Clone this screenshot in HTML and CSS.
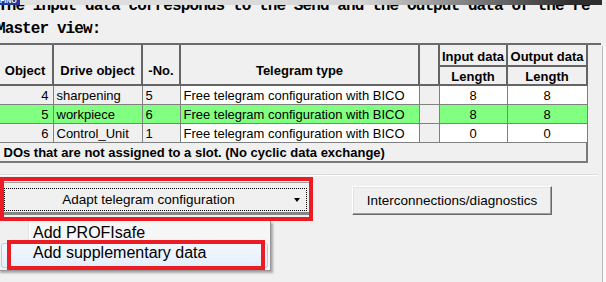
FILE: index.html
```html
<!DOCTYPE html>
<html lang="en">
<head>
<meta charset="UTF-8" />
<title>Telegram configuration</title>
<link rel="stylesheet" href="styles.css">
</head>
<body>

<div class="window">
  <div class="main">

    <!-- Intro text (top half hidden behind the window edge) -->
    <div class="intro">
      <span class="tag">FINO</span>
      <p>The input data corresponds to the Send and the Output data of the re</p>
    </div>
    <h2 class="caption">Master view:</h2>

    <!-- Slot table -->
    <div class="frame">
      <table class="slots">
        <colgroup>
          <col style="width:56px">
          <col style="width:89px">
          <col style="width:38px">
          <col style="width:239px">
          <col style="width:20px">
          <col style="width:68px">
          <col style="width:80px">
        </colgroup>
        <thead>
          <tr>
            <th rowspan="2" class="low">Object</th>
            <th rowspan="2" class="low">Drive object</th>
            <th rowspan="2" class="low">-No.</th>
            <th rowspan="2" class="low">Telegram type</th>
            <th rowspan="2"></th>
            <th>Input data</th>
            <th>Output data</th>
          </tr>
          <tr>
            <th class="sub">Length</th>
            <th class="sub">Length</th>
          </tr>
        </thead>
        <tbody>
          <tr>
            <td class="num">4</td>
            <td>sharpening</td>
            <td>5</td>
            <td class="white">Free telegram configuration with BICO</td>
            <td class="gap"></td>
            <td class="len">8</td>
            <td class="len">8</td>
          </tr>
          <tr class="sel">
            <td class="num">5</td>
            <td>workpiece</td>
            <td>6</td>
            <td class="white">Free telegram configuration with BICO</td>
            <td class="gap"></td>
            <td class="len">8</td>
            <td class="len">8</td>
          </tr>
          <tr>
            <td class="num">6</td>
            <td>Control_Unit</td>
            <td>1</td>
            <td class="white">Free telegram configuration with BICO</td>
            <td class="gap"></td>
            <td class="len">0</td>
            <td class="len">0</td>
          </tr>
          <tr class="note">
            <td colspan="7">DOs that are not assigned to a slot. (No cyclic data exchange)</td>
          </tr>
        </tbody>
      </table>
    </div>

    <div class="rule"></div>

    <!-- Buttons -->
    <div class="actions">
      <div class="combo-mark">
        <div class="combo">
          <div class="focus">
            <span>Adapt telegram configuration</span>
            <i class="arrow"></i>
          </div>
        </div>
      </div>
      <button class="btn">Interconnections/diagnostics</button>
    </div>

    <!-- Dropdown menu -->
    <ul class="menu">
      <li>Add PROFIsafe</li>
      <li class="hot">Add supplementary data</li>
    </ul>
    <div class="item-mark"></div>

  </div>
  <div class="side"></div>
</div>

</body>
</html>
```

FILE: styles.css
```css
/* Reset and basics */
* {margin:0; padding:0; box-sizing:border-box;}
html, body {
  width: 606px;
  height: 282px;
  overflow: hidden;
  background: #f0f0f0;
}
body {
  font-family: "Liberation Sans", Arial, sans-serif;
  font-size: 13px;
  color: #000;
}

.window {
  display: flex;
  height: 282px;
}
.main {
  position: relative;
  width: 602px;
  flex: none;
}
.side {
  flex: 1;
  margin-top: 46px;
  border-left: 1px solid #b9b9b9;
  background: #fafafa;
}

/* Intro lines */
.intro {
  position: relative;
  height: 13px;
  overflow: hidden;
}
.intro p {
  font: bold 16px/16px "Liberation Mono", monospace;
  letter-spacing: -0.9px;
  white-space: nowrap;
  margin: -2px 0 0 -2px;
}
/* window edge covering the top of the first line */
.intro::after {
  content: "";
  position: absolute;
  top: 0; left: 0;
  width: 100%; height: 5px;
  background: linear-gradient(90deg, #e2e2e2 0, #d6d6d6 60%, #2e2e2e 95%);
}
.tag {
  position: absolute;
  top: -3px; left: 0;
  width: 20px; height: 8px;
  background: #24379a;
  color: #fff;
  font: bold 7px/8px "Liberation Sans", sans-serif;
  z-index: 2;
}
.caption {
  height: 30px;
  padding-top: 8px;
  margin-left: -4px;
  font: bold 16px/16px "Liberation Mono", monospace;
  letter-spacing: -0.9px;
  white-space: nowrap;
}

/* Slot table */
.frame {
  width: 601px;
  border-top: 2px solid #6b6b6b;
}
.slots {
  margin-left: -4px;
  width: 590px;
  table-layout: fixed;
  border-collapse: collapse;
}
.slots th {
  background: #f0f0f0;
  border: 2px solid #646464;
  font-weight: bold;
  text-align: center;
  height: 21px;
  padding: 2px 0 0;
  white-space: nowrap;
}
.slots thead tr:first-child th {
  border-top: 0;
}
.slots th.low {
  padding-top: 12px;
}
.slots th.sub {
  height: 19px;
}
.slots td {
  background: #f0f0f0;
  border: 1px solid #808080;
  height: 19px;
  padding: 1px 3px 0;
  white-space: nowrap;
  overflow: hidden;
}
.slots td.num {
  text-align: right;
  padding-right: 4px;
}
.slots td.white,
.slots td.len {
  background: #fff;
}
.slots td.len {
  text-align: center;
}
.slots tr.sel td {
  background: #80ff80;
}
.slots tr.sel td.gap {
  background: #f0f0f0;
}
.slots tr.note td {
  font-weight: bold;
  padding-left: 6px;
  height: 20px;
  border-right: 2px solid #7a7a7a;
  border-bottom: 2px solid #7a7a7a;
}

.rule {
  width: 598px;
  margin-top: 11px;
  border-top: 1px solid #dcdcdc;
  border-bottom: 1px solid #fff;
}

/* Buttons */
.actions {
  display: flex;
  align-items: flex-start;
  gap: 39px;
  margin-top: 1px;
}
.combo-mark {
  width: 313px;
  height: 44px;
  border: 4px solid #ec1c24;
}
.combo {
  margin-top: 1px;
  border-top: 1px solid #a0a0a0;
  border-bottom: 3px solid #868686;
  padding: 5px 2px 1px 0;
}
.focus {
  height: 23px;
  border: 1px dotted #000;
  display: grid;
  grid-template-columns: 1fr 10px;
  align-items: center;
  padding-right: 4px;
  font-size: 13.5px;
}
.focus span {
  text-align: center;
}
.arrow {
  justify-self: center;
  width: 0; height: 0;
  border-style: solid;
  border-width: 4px 3.5px 0;
  border-color: #000 transparent transparent;
}
.btn {
  margin-top: 9px;
  width: 200px;
  height: 29px;
  background: #f0f0f0;
  border: 1px solid;
  border-color: #fff #696969 #696969 #fff;
  box-shadow: inset -1px -1px #a0a0a0, inset 1px 1px #e3e3e3;
  font-family: "Liberation Sans", Arial, sans-serif;
  font-size: 13.5px;
  color: #000;
}

/* Dropdown menu */
.menu {
  position: absolute;
  top: 221px;
  left: -2px;
  width: 273px;
  list-style: none;
  background: linear-gradient(90deg, #f0f0f0 29px, #e2e3e3 29px, #e2e3e3 30px, #fff 30px, #fff 31px, #f6f6f6 31px);
  border: 1px solid #979797;
  border-top: 0;
  box-shadow: 2px 2px 2px rgba(0,0,0,0.3);
  padding: 1px 2px 2px;
  font-size: 16px;
  z-index: 5;
}
.menu li {
  height: 21px;
  line-height: 21px;
  padding-left: 32px;
  white-space: nowrap;
}
.menu li.hot {
  height: 25px;
  line-height: 17px;
  padding-left: 31px;
  border: 1px solid #aecff7;
  border-radius: 3px;
  background: linear-gradient(#f3f8fe, #e3eefc);
}
.item-mark {
  position: absolute;
  top: 240px;
  left: 7px;
  width: 258px;
  height: 30px;
  border: 4px solid #ec1c24;
  z-index: 6;
}
```
